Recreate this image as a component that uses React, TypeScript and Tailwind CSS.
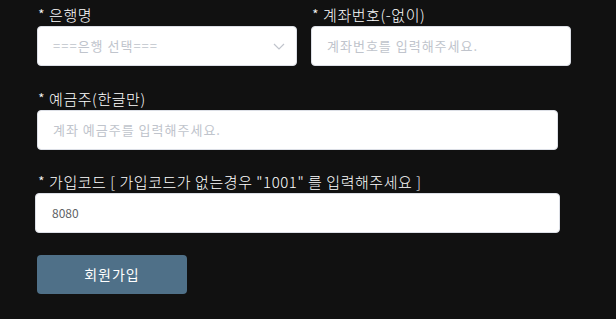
import React from "react";

const font = { fontFamily: '"Noto Sans CJK KR", "Noto Sans", sans-serif' };

function Label({ children }: { children: React.ReactNode }) {
  return (
    <div className="h-[22px] leading-[22px] text-[15px] tracking-[0.55px] text-white pl-[1px] whitespace-nowrap font-light">
      {children}
    </div>
  );
}

export default function App() {
  return (
    <div
      className="min-h-screen w-full bg-[#111111] pt-[4px] font-['Noto_Sans_CJK_KR',sans-serif]"
      style={font}
    >
      <div className="flex gap-[14px] pl-[37px]">
        <div className="w-[260px]">
          <Label>* 은행명</Label>
          <div className="flex h-[40px] items-center justify-between rounded-[4px] border border-[#dcdfe6] bg-white pl-[15px] pr-[11px]">
            <span className="text-[13px] tracking-[1px] text-[#c0c4cc]">===은행 선택===</span>
            <svg width="12" height="7" viewBox="0 0 12 7" fill="none">
              <path d="M1 1L6 6L11 1" stroke="#c0c4cc" strokeWidth="1.2" />
            </svg>
          </div>
        </div>
        <div className="w-[260px]">
          <Label>* 계좌번호(-없이)</Label>
          <div className="flex h-[40px] items-center rounded-[4px] border border-[#dcdfe6] bg-white pl-[15px]">
            <span className="text-[13px] tracking-[1px] text-[#c0c4cc]">계좌번호를 입력해주세요.</span>
          </div>
        </div>
      </div>

      <div className="mt-[22px] pl-[37px]">
        <Label>* 예금주(한글만)</Label>
        <div className="flex h-[40px] w-[521px] items-center rounded-[4px] border border-[#dcdfe6] bg-white pl-[15px]">
          <span className="text-[13px] tracking-[1px] text-[#c0c4cc]">계좌 예금주를 입력해주세요.</span>
        </div>
      </div>

      <div className="mt-[21px] pl-[35px]">
        <div className="pl-[2px]">
          <Label>* 가입코드 [ 가입코드가 없는경우 "1001" 를 입력해주세요 ]</Label>
        </div>
        <div className="flex h-[40px] w-[525px] items-center rounded-[4px] border border-[#dcdfe6] bg-white pl-[16px]">
          <span className="text-[12px] text-[#606266]">8080</span>
        </div>
      </div>

      <div className="mt-[22px] pl-[37px]">
        <button className="flex h-[39px] w-[150px] items-center justify-center rounded-[4px] bg-[#4f7088] text-[14px] tracking-[1px] text-white">
          회원가입
        </button>
      </div>
    </div>
  );
}
